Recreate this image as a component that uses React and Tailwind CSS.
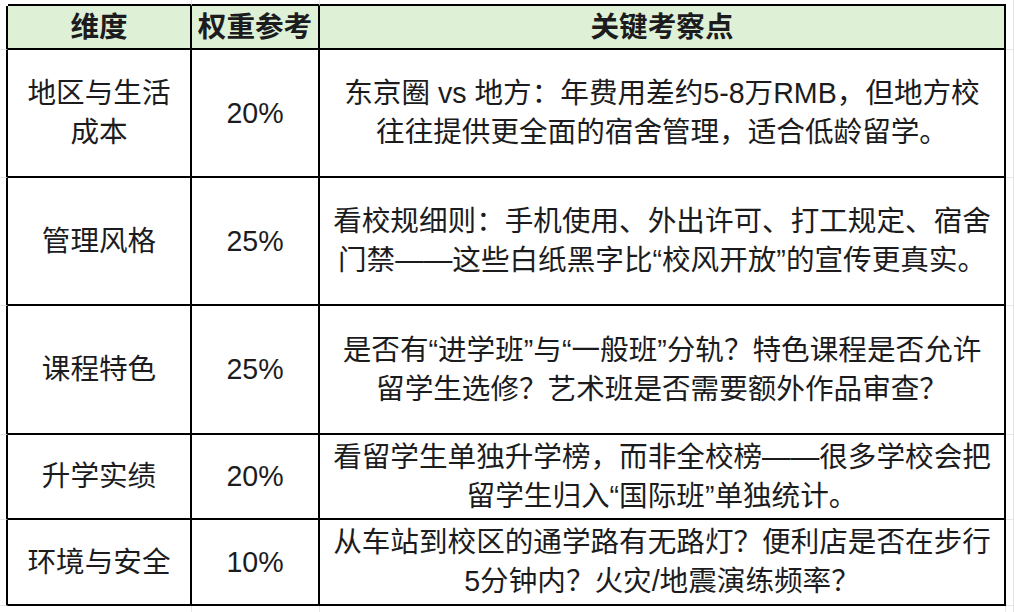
const rows = [
  {
    dim: ["地区与生活", "成本"],
    weight: "20%",
    points: ["东京圈 vs 地方：年费用差约5-8万RMB，但地方校", "往往提供更全面的宿舍管理，适合低龄留学。"],
  },
  {
    dim: ["管理风格"],
    weight: "25%",
    points: ["看校规细则：手机使用、外出许可、打工规定、宿舍", "门禁——这些白纸黑字比“校风开放”的宣传更真实。"],
  },
  {
    dim: ["课程特色"],
    weight: "25%",
    points: ["是否有“进学班”与“一般班”分轨？特色课程是否允许", "留学生选修？艺术班是否需要额外作品审查？"],
  },
  {
    dim: ["升学实绩"],
    weight: "20%",
    points: ["看留学生单独升学榜，而非全校榜——很多学校会把", "留学生归入“国际班”单独统计。"],
  },
  {
    dim: ["环境与安全"],
    weight: "10%",
    points: ["从车站到校区的通学路有无路灯？便利店是否在步行", "5分钟内？火灾/地震演练频率？"],
  },
];

function Lines({ lines }) {
  return (
    <div className="text-center">
      {lines.map((l, i) => (
        <div key={i} className="whitespace-nowrap">{l}</div>
      ))}
    </div>
  );
}

export default function App() {
  const cell = "flex items-center justify-center border-r-2 border-b-2 border-black";
  const faint = "border-[#e6e6e6]";

  return (
    <div className="grid h-[612px] w-full grid-cols-[8px_184px_128px_686px_1fr] grid-rows-[6px_44px_128px_128px_129px_85px_86px_1fr] bg-white text-[28.6px] leading-[39px] text-[#1c1c1e] font-['Liberation_Sans','Noto_Sans_CJK_SC',sans-serif]">
      {/* spreadsheet top edge */}
      <div />
      <div className="border-b-2 border-b-black border-r border-r-[#e6e6e6]" />
      <div className="border-b-2 border-b-black border-r border-r-[#e6e6e6]" />
      <div className="border-b-2 border-b-black" />
      <div className={`border-r ${faint}`} />

      {/* header */}
      <div className="border-r-2 border-r-black border-b border-b-[#e6e6e6]" />
      <div className={`${cell} bg-[#def1d6] font-bold`}>维度</div>
      <div className={`${cell} bg-[#def1d6] font-bold`}>权重参考</div>
      <div className={`${cell} bg-[#def1d6] font-bold`}>关键考察点</div>
      <div className={`border-r border-b ${faint}`} />

      {rows.map((r, i) => (
        <div key={i} className="contents">
          <div className="border-r-2 border-r-black border-b border-b-[#e6e6e6]" />
          <div className={cell}>
            <Lines lines={r.dim} />
          </div>
          <div className={cell}>{r.weight}</div>
          <div className={cell}>
            <Lines lines={r.points} />
          </div>
          <div className={`border-r border-b ${faint}`} />
        </div>
      ))}

      {/* spreadsheet bottom edge */}
      <div />
      <div className={`border-r ${faint}`} />
      <div className={`border-r ${faint}`} />
      <div className={`border-r ${faint}`} />
      <div className={`border-r ${faint}`} />
    </div>
  );
}
